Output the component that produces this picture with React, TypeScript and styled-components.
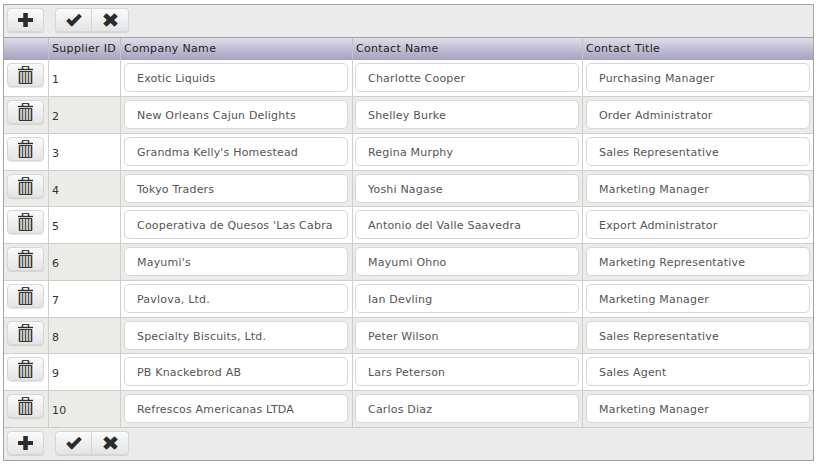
import type { ReactNode } from "react";
import styled, { createGlobalStyle } from "styled-components";

const suppliers = [
  { id: 1, company: "Exotic Liquids", contact: "Charlotte Cooper", title: "Purchasing Manager" },
  { id: 2, company: "New Orleans Cajun Delights", contact: "Shelley Burke", title: "Order Administrator" },
  { id: 3, company: "Grandma Kelly's Homestead", contact: "Regina Murphy", title: "Sales Representative" },
  { id: 4, company: "Tokyo Traders", contact: "Yoshi Nagase", title: "Marketing Manager" },
  { id: 5, company: "Cooperativa de Quesos 'Las Cabra", contact: "Antonio del Valle Saavedra", title: "Export Administrator" },
  { id: 6, company: "Mayumi's", contact: "Mayumi Ohno", title: "Marketing Representative" },
  { id: 7, company: "Pavlova, Ltd.", contact: "Ian Devling", title: "Marketing Manager" },
  { id: 8, company: "Specialty Biscuits, Ltd.", contact: "Peter Wilson", title: "Sales Representative" },
  { id: 9, company: "PB Knackebrod AB", contact: "Lars Peterson", title: "Sales Agent" },
  { id: 10, company: "Refrescos Americanas LTDA", contact: "Carlos Diaz", title: "Marketing Manager" },
];

const columns = "45px 72px 232px 230px 1fr";

const GlobalStyle = createGlobalStyle`
  html, body {
    margin: 0;
    padding: 0;
    background: #fff;
  }
`;

const Grid = styled.div`
  box-sizing: border-box;
  width: 811px;
  height: 457px;
  margin: 4px 0 0 3px;
  border: 1px solid #a3a3a3;
  background: #ebebeb;
  display: flex;
  flex-direction: column;
  font-family: "DejaVu Sans", sans-serif;
  font-size: 11px;
  color: #333;
`;

const Toolbar = styled.div<{ $bottom?: boolean }>`
  height: ${(p) => (p.$bottom ? "32px" : "33px")};
  flex: none;
  box-sizing: border-box;
  display: flex;
  align-items: flex-start;
  gap: 11px;
  padding: 3px 0 0 3px;
  border-bottom: ${(p) => (p.$bottom ? "none" : "1px solid #a3a3a3")};
`;

const ButtonGroup = styled.div`
  display: flex;
`;

const Button = styled.button<{ $pos?: "left" | "right" }>`
  box-sizing: border-box;
  width: 37px;
  height: 24px;
  padding: 0;
  display: flex;
  align-items: center;
  justify-content: center;
  border: 1px solid #d6d6d6;
  border-left-width: ${(p) => (p.$pos === "right" ? "0" : "1px")};
  border-radius: ${(p) =>
    p.$pos === "left" ? "4px 0 0 4px" : p.$pos === "right" ? "0 4px 4px 0" : "4px"};
  background: linear-gradient(#fbfbfb, #e4e4e4);
  box-shadow: 0 1px 1px rgba(0, 0, 0, 0.1);
`;

const Header = styled.div`
  height: 22px;
  flex: none;
  display: grid;
  grid-template-columns: ${columns};
  background: linear-gradient(#dedeea, #a4a1bd);
`;

const HeaderCell = styled.div`
  display: flex;
  align-items: center;
  padding: 0 0 1px 3px;
  border-right: 1px solid #c2c2cc;
  color: #222;
  letter-spacing: 0.33px;
  white-space: nowrap;
  &:last-child {
    border-right: none;
  }
`;

const Body = styled.div`
  flex: 1;
  display: grid;
  grid-template-rows: 37px 37px 37px 36px 37px 37px 37px 36px 37px 37px;
`;

const Row = styled.div<{ $alt: boolean }>`
  box-sizing: border-box;
  display: grid;
  grid-template-columns: ${columns};
  background: ${(p) => (p.$alt ? "#ebebe8" : "#fff")};
  border-bottom: 1px solid #cfcfcf;
`;

const Cell = styled.div`
  min-width: 0;
  display: flex;
  box-sizing: border-box;
  border-right: 1px solid #cfcfcf;
  &:last-child {
    border-right: none;
  }
`;

const ActionCell = styled(Cell)`
  align-items: flex-start;
  padding: 3px 0 0 3px;
`;

const IdCell = styled(Cell)`
  align-items: center;
  padding: 3px 0 0 3px;
  letter-spacing: 0.2px;
`;

const EditCell = styled(Cell)<{ $left: number }>`
  align-items: flex-start;
  padding: 3px 0 0 ${(p) => p.$left}px;
`;

const Editor = styled.input`
  box-sizing: border-box;
  flex: none;
  width: 224px;
  height: 29px;
  padding: 1px 12px 0;
  border: 1px solid #d6d6d6;
  border-radius: 5px;
  background: #fff;
  font: inherit;
  letter-spacing: 0.2px;
  color: #555;
  outline: none;
`;

// glyph edges in the picture carry orange and blue fringes
const Fringed = ({ children }: { children: ReactNode }) => (
  <>
    <g transform="translate(-0.6 0)" fill="#d8862e" stroke="#d8862e">
      {children}
    </g>
    <g transform="translate(0.6 0)" fill="#3f8fd8" stroke="#3f8fd8">
      {children}
    </g>
    <g fill="#2b2b2b" stroke="#2b2b2b">
      {children}
    </g>
  </>
);

const PlusIcon = () => (
  <svg width="15" height="14" viewBox="0 0 15 14">
    <Fringed>
      <path d="M5.500 0h4v5h5.500v4H9.500v5h-4V9H0V5h5.500z" stroke="none" />
    </Fringed>
  </svg>
);

const CheckIcon = () => (
  <svg width="16" height="14" viewBox="0 0 16 14">
    <Fringed>
      <path d="M0.500 8l2.500-2.500 2.700 2.800L13 1l2.500 2.500L5.700 13.500z" stroke="none" />
    </Fringed>
  </svg>
);

const CrossIcon = () => (
  <svg width="15" height="14" viewBox="0 0 15 14">
    <Fringed>
      <path d="M3.500 0.500l4 3.700 4-3.700 3 3-3.700 3.500 3.700 3.500-3 3-4-3.700-4 3.700-3-3L4.200 7 0.500 3.500z" stroke="none" />
    </Fringed>
  </svg>
);

const TrashIcon = () => (
  <svg width="15" height="18" viewBox="0 0 15 18">
    <Fringed>
      <path d="M4.500 3V0.500h6V3" fill="none" strokeWidth="0.800" />
      <path d="M0 3.500h15" strokeWidth="1.200" fill="none" />
      <path d="M1.500 5.500h12v12h-12z" fill="none" strokeWidth="0.900" />
      <path d="M4.500 6v11M7.500 6v11M10.500 6v11" strokeWidth="0.700" fill="none" />
    </Fringed>
  </svg>
);

const Actions = ({ bottom }: { bottom?: boolean }) => (
  <Toolbar $bottom={bottom}>
    <Button>
      <PlusIcon />
    </Button>
    <ButtonGroup>
      <Button $pos="left">
        <CheckIcon />
      </Button>
      <Button $pos="right">
        <CrossIcon />
      </Button>
    </ButtonGroup>
  </Toolbar>
);

const App = () => {
  return (
    <>
      <GlobalStyle />
      <Grid>
        <Actions />
        <Header>
          <HeaderCell />
          <HeaderCell>Supplier ID</HeaderCell>
          <HeaderCell>Company Name</HeaderCell>
          <HeaderCell>Contact Name</HeaderCell>
          <HeaderCell>Contact Title</HeaderCell>
        </Header>
        <Body>
          {suppliers.map((s, index) => (
            <Row key={s.id} $alt={index % 2 === 1}>
              <ActionCell>
                <Button>
                  <TrashIcon />
                </Button>
              </ActionCell>
              <IdCell>{s.id}</IdCell>
              <EditCell $left={3}>
                <Editor readOnly value={s.company} />
              </EditCell>
              <EditCell $left={2}>
                <Editor readOnly value={s.contact} />
              </EditCell>
              <EditCell $left={3}>
                <Editor readOnly value={s.title} />
              </EditCell>
            </Row>
          ))}
        </Body>
        <Actions bottom />
      </Grid>
    </>
  );
};

export default App;
